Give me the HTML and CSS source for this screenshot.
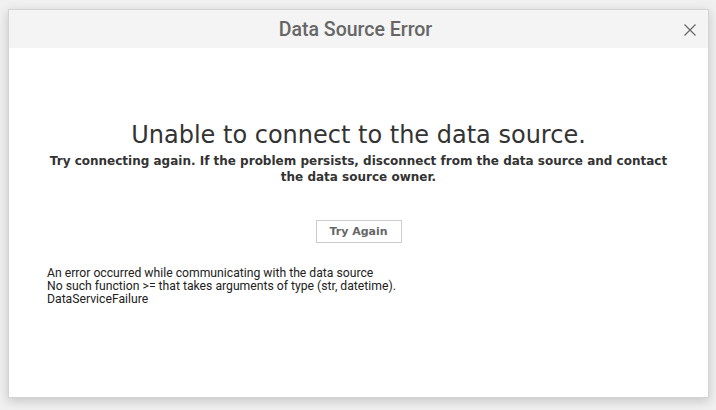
FILE: index.html
```html
<!DOCTYPE html>
<html>
<head>
<meta charset="utf-8">
<link rel="stylesheet" href="styles.css">
</head>
<body>
<div class="dialog">
  <div class="header">
    <span class="title">Data Source Error</span>
    <span class="close" aria-label="Close">
      <svg width="12" height="12" viewBox="0 0 12 12"><path d="M0.5 0.5 L11.5 11.5 M11.5 0.5 L0.5 11.5" stroke="#6b6b6b" stroke-width="1.3" fill="none"/></svg>
    </span>
  </div>
  <div class="content">
    <h1 class="heading">Unable to connect to the data source.</h1>
    <p class="sub">Try connecting again. If the problem persists, disconnect from the data source and contact the data source owner.</p>
    <div class="actions"><button class="btn">Try Again</button></div>
    <div class="details">
      <div>An error occurred while communicating with the data source</div>
      <div>No such function &gt;= that takes arguments of type (str, datetime).</div>
      <div>DataServiceFailure</div>
    </div>
  </div>
</div>
</body>
</html>
```
FILE: styles.css
```css
html, body {
  margin: 0;
  padding: 0;
  background: #f0f0f0;
  width: 716px;
  height: 410px;
  overflow: hidden;
}
body {
  padding: 9px 0 0 8px;
  box-sizing: border-box;
}
.dialog {
  width: 701px;
  height: 389px;
  background: #ffffff;
  border: 1px solid #d4d4d4;
  box-sizing: border-box;
  box-shadow: 0 3px 10px rgba(0,0,0,0.18);
  display: flex;
  flex-direction: column;
}
.header {
  height: 38px;
  background: #f4f4f4;
  display: flex;
  align-items: center;
  justify-content: center;
  padding-right: 6px;
  position: relative;
}
.title {
  font-family: Roboto, "Noto Sans", sans-serif;
  font-size: 19.5px;
  color: #666666;
  font-weight: 500;
}
.close {
  position: absolute;
  right: 12px;
  top: 14px;
  width: 12px;
  height: 12px;
  display: flex;
}
.content {
  padding: 73px 38px 0 38px;
  display: flex;
  flex-direction: column;
}
.heading {
  margin: 0;
  font-family: Verdana, "DejaVu Sans", sans-serif;
  font-weight: normal;
  font-size: 24px;
  line-height: 28px;
  color: #333333;
  text-align: center;
}
.sub {
  margin: 4px 0 0 0;
  font-family: Verdana, "DejaVu Sans", sans-serif;
  font-weight: bold;
  font-size: 12px;
  line-height: 16px;
  color: #333333;
  text-align: center;
}
.actions {
  display: flex;
  justify-content: center;
  margin-top: 35px;
}
.btn {
  width: 86px;
  height: 23px;
  background: #ffffff;
  border: 1px solid #cccccc;
  font-family: Verdana, "DejaVu Sans", sans-serif;
  font-weight: bold;
  font-size: 11px;
  color: #666666;
  padding: 0;
}
.details {
  margin-top: 24px;
  font-family: Roboto, "Noto Sans", sans-serif;
  font-size: 12.2px;
  line-height: 13px;
  color: #222222;
}
```
